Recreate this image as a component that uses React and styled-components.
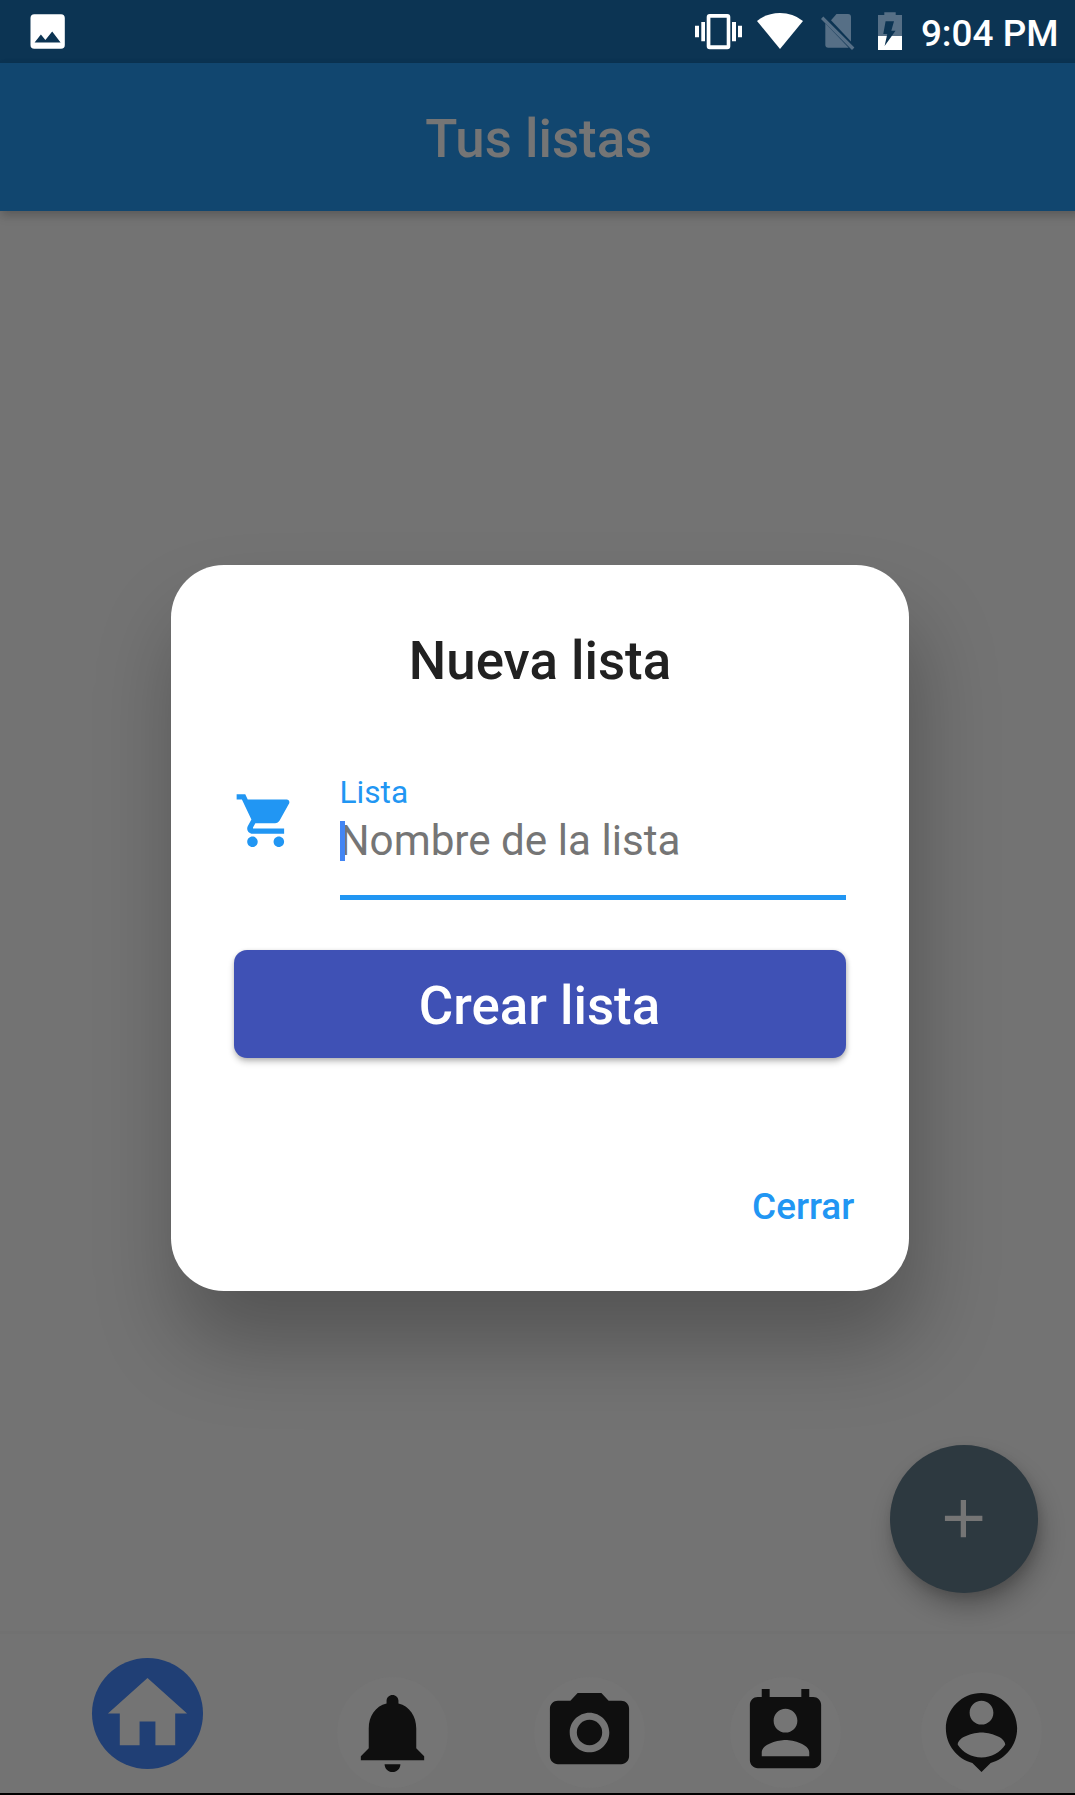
import React from "react";
import styled, { createGlobalStyle } from "styled-components";

const GlobalStyle = createGlobalStyle`
  * { box-sizing: border-box; }
  html, body { margin: 0; padding: 0; background: #000; }
  body { overflow: hidden; font-family: Roboto, "Liberation Sans", sans-serif; }
`;

const Viewport = styled.div`
  width: 1075px;
  height: 1795px;
  overflow: hidden;
  background: #000;
`;

const Screen = styled.div`
  position: relative;
  display: flex;
  flex-direction: column;
  width: 1080px;
  height: 1793px;
  background: #737373;
`;

const StatusBar = styled.header`
  display: flex;
  flex: none;
  align-items: center;
  justify-content: space-between;
  height: 63px;
  padding: 0 21.5px 0 24px;
  background: #0c3453;
`;

const StatusIcons = styled.div`
  display: flex;
  align-items: center;
  color: #fff;
`;

const Clock = styled.time`
  margin-left: 16.5px;
  font-size: 36.9px;
  font-weight: 500;
  line-height: 44px;
  padding-top: 4px;
  white-space: nowrap;
`;

const Glyph = styled.svg`
  display: block;
  flex: none;
  width: ${(p) => p.$w}px;
  height: ${(p) => p.$h || p.$w}px;
  fill: ${(p) => p.$color || "currentColor"};
`;

const AppBar = styled.div`
  z-index: 1;
  display: flex;
  flex: none;
  align-items: center;
  justify-content: center;
  height: 147.7px;
  padding: 5px 2.4px 0 0;
  background: #11466f;
  box-shadow: 0 5px 10px rgba(0, 0, 0, 0.13), 3px 3px 8px rgba(0, 0, 0, 0.1);
`;

const BarTitle = styled.h1`
  margin: 0;
  color: #757575;
  font-size: 52.8px;
  font-weight: 500;
  line-height: 62px;
`;

const Content = styled.main`
  display: flex;
  flex: 1;
  align-items: flex-end;
  justify-content: flex-end;
  padding: 0 42.4px 38.4px 0;
`;

const AddButton = styled.button`
  display: flex;
  align-items: center;
  justify-content: center;
  width: 147.8px;
  height: 147.8px;
  padding: 0;
  border: 0;
  border-radius: 50%;
  color: #757575;
  background: #2d3940;
  box-shadow: 4px 15px 24px rgba(0, 0, 0, 0.24), 2px 5px 10px rgba(0, 0, 0, 0.12);
`;

const NavBar = styled.nav`
  display: flex;
  flex: none;
  height: 162px;
  border-top: 3px solid #717171;
  background: #737373;
`;

const NavItem = styled.div`
  display: flex;
  flex: ${(p) => (p.$active ? 1.5 : 1)};
  align-items: center;
  justify-content: center;
  padding-top: ${(p) => (p.$active ? 0.4 : 37.4)}px;
`;

const NavDisc = styled.div`
  display: flex;
  flex: none;
  align-items: center;
  justify-content: center;
  width: ${(p) => p.$size || 111}px;
  height: ${(p) => p.$size || 111}px;
  border-radius: 50%;
  color: ${(p) => (p.$active ? "#747474" : "#0f0f0f")};
  background: ${(p) => (p.$active ? "#203f75" : "#757575")};
`;

const Overlay = styled.div`
  position: absolute;
  inset: 0;
  z-index: 2;
  display: flex;
  align-items: center;
  justify-content: center;
  padding-top: 62.8px;
`;

const Dialog = styled.section`
  display: flex;
  flex-direction: column;
  width: 738.6px;
  height: 725.3px;
  padding: 65px 63px 0;
  border-radius: 52.8px;
  background: #fff;
  box-shadow: 7px 53px 82px rgba(0, 0, 0, 0.265);
`;

const DialogTitle = styled.h2`
  margin: 0;
  color: #212121;
  font-size: 52.8px;
  font-weight: 500;
  line-height: 62px;
  text-align: center;
`;

const FieldRow = styled.div`
  display: flex;
  margin-top: 81px;
`;

const CartSlot = styled.div`
  width: 105.8px;
  padding-top: 16px;
  color: #2196f3;
`;

const Field = styled.label`
  display: flex;
  flex: 1;
  flex-direction: column;
  height: 127px;
  padding-top: 1px;
  border-bottom: 5.3px solid #2196f3;
`;

const FieldLabel = styled.span`
  color: #2196f3;
  font-size: 31.65px;
  line-height: 37px;
`;

const Hint = styled.span`
  position: relative;
  margin-top: 5px;
  color: #757575;
  font-size: 42.2px;
  line-height: 50px;
  white-space: nowrap;
`;

const Caret = styled.i`
  position: absolute;
  top: 5px;
  left: 0.4px;
  width: 5.5px;
  height: 39.7px;
  background: #4285f4;
`;

const CreateButton = styled.button`
  height: 108px;
  margin-top: 50px;
  padding: 3.4px 1px 0 0;
  border: 0;
  border-radius: 13px;
  color: #fff;
  background: #3f51b5;
  box-shadow: 0 4px 6px rgba(0, 0, 0, 0.22), 1px 1px 4px rgba(0, 0, 0, 0.14);
  font: 500 52.8px/62px Roboto, "Liberation Sans", sans-serif;
`;

const CloseButton = styled.button`
  align-self: flex-end;
  margin: 127.2px -8px 0 0;
  padding: 0;
  border: 0;
  color: #2196f3;
  background: none;
  font: 500 36.9px/44px Roboto, "Liberation Sans", sans-serif;
`;

const navItems = [
  { id: "home", active: true, path: "M10 20v-6h4v6h5v-8h3L12 3 2 12h3v8z" },
  {
    id: "alerts",
    path: "M12 22c1.1 0 2-.9 2-2h-4c0 1.1.89 2 2 2zm6-6v-5c0-3.07-1.64-5.64-4.5-6.32V4c0-.83-.67-1.5-1.5-1.5s-1.5.67-1.5 1.5v.68C7.63 5.36 6 7.92 6 11v5l-2 2v1h16v-1l-2-2z",
  },
  {
    id: "camera",
    path: "M12 8.8a3.2 3.2 0 1 0 0 6.4a3.2 3.2 0 1 0 0-6.4zM9 2L7.17 4H4c-1.1 0-2 .9-2 2v12c0 1.1.9 2 2 2h16c1.1 0 2-.9 2-2V6c0-1.1-.9-2-2-2h-3.17L15 2H9zm3 15c-2.76 0-5-2.24-5-5s2.24-5 5-5 5 2.24 5 5-2.24 5-5 5z",
  },
  {
    id: "contacts",
    path: "M19 3h-1V1h-2v2H8V1H6v2H5c-1.11 0-2 .9-2 2v14c0 1.1.89 2 2 2h14c1.1 0 2-.9 2-2V5c0-1.1-.9-2-2-2zm-7 3c1.66 0 3 1.34 3 3s-1.34 3-3 3-3-1.34-3-3 1.34-3 3-3zm6 12H6v-1c0-2 4-3.1 6-3.1s6 1.1 6 3.1v1z",
  },
  {
    id: "profile",
    size: 121,
    path: "M12 2c-4.97 0-9 4.03-9 9 0 4.17 2.84 7.67 6.69 8.69L12 22l2.31-2.31C18.16 18.67 21 15.17 21 11c0-4.97-4.03-9-9-9zm0 2c1.66 0 3 1.34 3 3s-1.34 3-3 3-3-1.34-3-3 1.34-3 3-3zm0 14.3c-2.5 0-4.71-1.28-6-3.22.03-1.99 4-3.08 6-3.08 1.99 0 5.97 1.09 6 3.08-1.29 1.94-3.5 3.22-6 3.22z",
  },
];

export default function App() {
  return (
    <Viewport>
      <GlobalStyle />
      <Screen>
        <StatusBar>
          <Glyph $w={46} $h={63} viewBox="24 0 46 63" $color="#fff">
            <path
              fillRule="evenodd"
              d="M34.3 14.3H61a3.8 3.8 0 0 1 3.8 3.8V45a3.8 3.8 0 0 1-3.8 3.8H34.3a3.8 3.8 0 0 1-3.8-3.8V18.1a3.8 3.8 0 0 1 3.8-3.8zM34.6 42.5H60.6L52.2 31.6L45.4 40L40.9 34.6z"
            />
          </Glyph>
          <StatusIcons>
            <Glyph $w={214} $h={63} viewBox="690 0 214 63">
              <path
                fillRule="evenodd"
                d="M709.7 14h17.6a3 3 0 0 1 3 3v29.3a3 3 0 0 1-3 3h-17.6a3 3 0 0 1-3-3V17a3 3 0 0 1 3-3zM710.4 17.8v27.5h16.3V17.8z"
              />
              <path d="M701.3 22h3.7v19.3h-3.7zM695 25.7h4v11.6h-4zM732 22h4v19.3h-4zM738 25.7h4v11.6h-4z" />
              <path d="M780 49L757 20.9Q767 13 780 13T803 20.9z" />
              <g fill="#566f86">
                <path d="M836.5 14H848a3 3 0 0 1 3 3V41.5L831 20.2z" />
                <path d="M825.3 23.2L848.7 47.7H828.3a3 3 0 0 1-3-3z" />
                <path d="M821 18.9L823.3 16.4L854.4 47.5L852 50z" />
                <path d="M884.3 12.3h11.4V15H902V36H878V15h6.3z" />
              </g>
              <path d="M878 36h24v14H878z" />
              <path d="M885.6 21.3H894L891.3 30.7H895.5L884.6 46L887.3 34H883.3z" fill="#0c3453" />
            </Glyph>
            <Clock>9:04 PM</Clock>
          </StatusIcons>
        </StatusBar>
        <AppBar>
          <BarTitle>Tus listas</BarTitle>
        </AppBar>
        <Content>
          <AddButton aria-label="+">
            <Glyph $w={63.3} viewBox="0 0 24 24">
              <path d="M19.1 12.9h-6.2v6.2h-2v-6.2H4.9v-2h6V4.9h2v6h6.2v2z" />
            </Glyph>
          </AddButton>
        </Content>
        <NavBar>
          {navItems.map((item) => (
            <NavItem key={item.id} $active={item.active}>
              <NavDisc $active={item.active} $size={item.size}>
                <Glyph $w={95} viewBox="0 0 24 24">
                  <path d={item.path} />
                </Glyph>
              </NavDisc>
            </NavItem>
          ))}
        </NavBar>
        <Overlay>
          <Dialog>
            <DialogTitle>Nueva lista</DialogTitle>
            <FieldRow>
              <CartSlot>
                <Glyph $w={63.3} viewBox="0 0 24 24">
                  <path d="M7 18c-1.1 0-1.99.9-1.99 2S5.9 22 7 22s2-.9 2-2-.9-2-2-2zM1 2v2h2l3.6 7.59-1.35 2.45c-.16.28-.25.61-.25.96 0 1.1.9 2 2 2h12v-2H7.42c-.14 0-.25-.11-.25-.25l.03-.12.9-1.63h7.45c.75 0 1.41-.41 1.75-1.03l3.58-6.49c.08-.14.12-.31.12-.48 0-.55-.45-1-1-1H5.21l-.94-2H1zm16 16c-1.1 0-1.99.9-1.99 2s.89 2 1.99 2 2-.9 2-2-.9-2-2-2z" />
                </Glyph>
              </CartSlot>
              <Field>
                <FieldLabel>Lista</FieldLabel>
                <Hint>
                  Nombre de la lista
                  <Caret />
                </Hint>
              </Field>
            </FieldRow>
            <CreateButton>Crear lista</CreateButton>
            <CloseButton>Cerrar</CloseButton>
          </Dialog>
        </Overlay>
      </Screen>
    </Viewport>
  );
}
